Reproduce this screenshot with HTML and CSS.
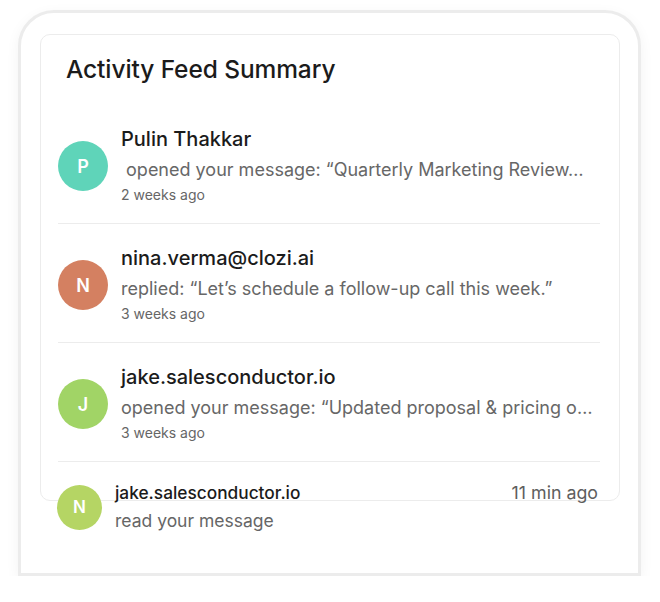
FILE: index.html
```html
<!DOCTYPE html>
<html lang="en">
<head>
<meta charset="utf-8">
<title>Activity Feed Summary</title>
<link rel="stylesheet" href="styles.css">
</head>
<body>
<div class="frame">
  <section class="card">
    <h1 class="title">Activity Feed Summary</h1>
    <ul class="feed">
      <li class="item">
        <span class="avatar av-teal">P</span>
        <div class="body">
          <div class="name">Pulin Thakkar</div>
          <div class="desc">&nbsp;opened your message: “Quarterly Marketing Review…</div>
          <div class="time">2 weeks ago</div>
        </div>
      </li>
      <li class="item">
        <span class="avatar av-clay">N</span>
        <div class="body">
          <div class="name">nina.verma@clozi.ai</div>
          <div class="desc">replied: “Let’s schedule a follow-up call this week.”</div>
          <div class="time">3 weeks ago</div>
        </div>
      </li>
      <li class="item">
        <span class="avatar av-green">J</span>
        <div class="body">
          <div class="name">jake.salesconductor.io</div>
          <div class="desc">opened your message: “Updated proposal &amp; pricing o…</div>
          <div class="time">3 weeks ago</div>
        </div>
      </li>
      <li class="item item-compact">
        <span class="avatar avatar-sm av-lime">N</span>
        <div class="body">
          <div class="name-row">
            <span class="name-sm">jake.salesconductor.io</span>
            <span class="ago">11 min ago</span>
          </div>
          <div class="desc-sm">read your message</div>
        </div>
      </li>
    </ul>
  </section>
</div>
</body>
</html>
```

FILE: styles.css
```css
* { box-sizing: border-box; }

html, body {
  margin: 0;
  background: #ffffff;
}

body {
  padding: 10px 19px 0 18px;
  font-family: Inter, "Noto Sans", "Liberation Sans", sans-serif;
  color: #1b1b1b;
}

.frame {
  width: 623px;
  height: 566px;
  border: 3px solid #ececec;
  border-radius: 36px 36px 0 0;
  background: #ffffff;
  box-shadow: 0 4px 14px rgba(0, 0, 0, 0.05);
  padding: 21px 18px 0 19px;
}

.card {
  height: 467px;
  border: 1px solid #ececec;
  border-radius: 10px;
  padding-top: 20px;
  background: #ffffff;
}

.title {
  margin: 0 0 22px 25px;
  font-size: 24.5px;
  line-height: 28px;
  font-weight: 500;
  color: #1b1b1b;
  letter-spacing: -0.1px;
}

.feed {
  list-style: none;
  margin: 0 19px 0 17px;
  padding: 0;
}

.item {
  display: flex;
  align-items: center;
  gap: 13px;
  padding: 22px 0 18px;
  border-bottom: 1px solid #ececec;
}

.avatar {
  flex: none;
  width: 50px;
  height: 50px;
  border-radius: 50%;
  display: flex;
  align-items: center;
  justify-content: center;
  color: #ffffff;
  font-size: 18px;
  font-weight: 600;
}

.av-teal { background: #5fd4b9; }
.av-clay { background: #d48061; }
.av-green { background: #a1d466; }
.av-lime { background: #b5d564; }

.body {
  flex: 1;
  min-width: 0;
}

.name {
  font-size: 20px;
  line-height: 25px;
  font-weight: 500;
  color: #1b1b1b;
}

.desc {
  margin-top: 5px;
  font-size: 18px;
  line-height: 26px;
  color: #676767;
  white-space: nowrap;
  overflow: hidden;
  text-overflow: ellipsis;
}

.time {
  margin-top: 2px;
  font-size: 14px;
  line-height: 20px;
  color: #666666;
}

.item-compact {
  border-bottom: none;
  padding: 20px 0 0;
  gap: 13px;
}

.avatar-sm {
  width: 45px;
  height: 45px;
  margin-left: -1px;
  font-size: 17px;
}

.name-row {
  display: flex;
  justify-content: space-between;
  align-items: baseline;
  padding-right: 2px;
}

.name-sm {
  font-size: 17.3px;
  line-height: 22px;
  font-weight: 500;
  color: #1b1b1b;
}

.ago {
  font-size: 17.8px;
  line-height: 22px;
  color: #5e5e5e;
}

.desc-sm {
  margin-top: 6px;
  font-size: 17.5px;
  line-height: 22px;
  color: #666666;
}
```
